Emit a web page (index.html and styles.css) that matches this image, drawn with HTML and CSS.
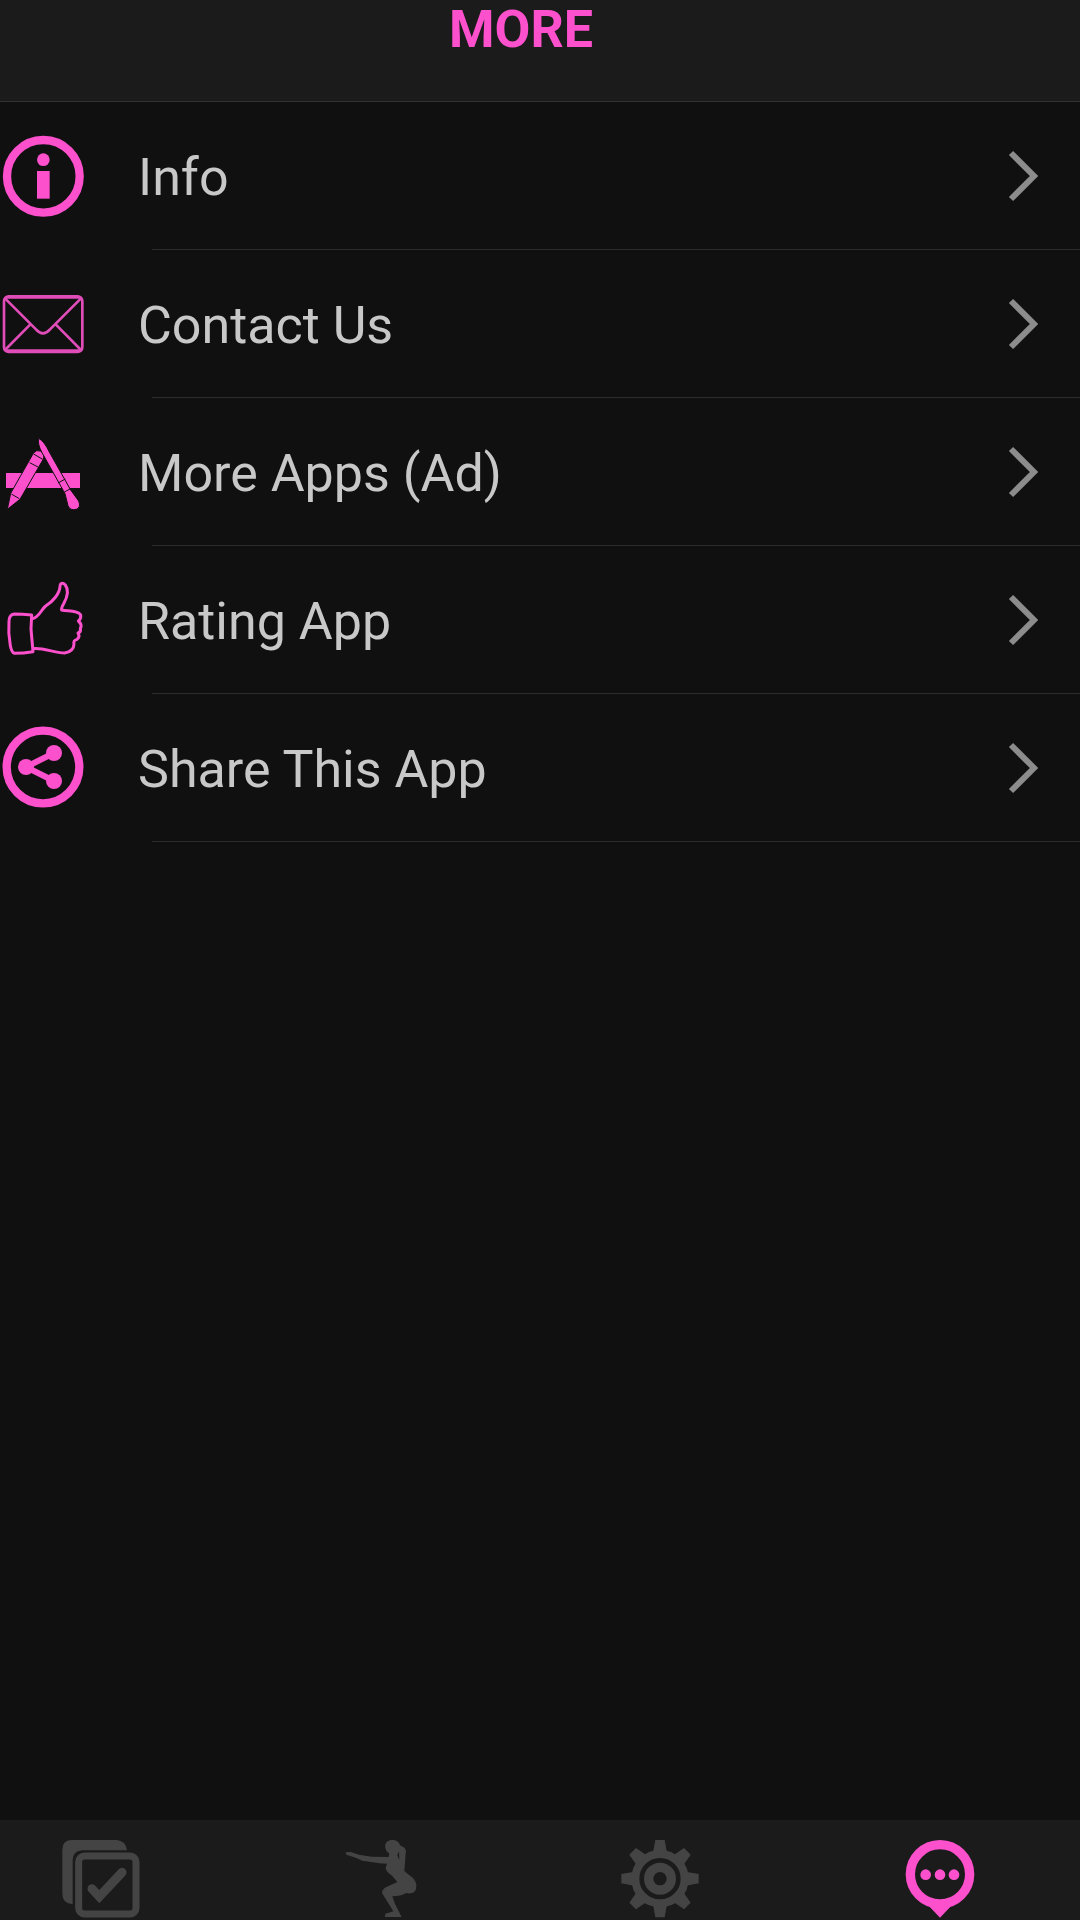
FILE: index.html
```html
<!DOCTYPE html>
<html lang="en">
<head>
<meta charset="utf-8">
<meta name="viewport" content="width=device-width, initial-scale=1">
<title>More</title>
<link rel="stylesheet" href="styles.css">
</head>
<body>
<svg class="defs" aria-hidden="true">
  <symbol id="chevron" viewBox="0 0 30 52"><path d="M3 3 26 26 3 49" fill="none" stroke="currentColor" stroke-width="6"/></symbol>
</svg>
<header class="header"><h1 class="title">MORE</h1></header>
<main class="content">
  <ul class="menu">
    <li class="item">
      <a class="link" href="#info">
        <svg class="icon" viewBox="0 66 261 261" aria-hidden="true">
          <circle cx="130" cy="199" r="109" fill="none" stroke="currentColor" stroke-width="25"/>
          <circle cx="130" cy="149" r="19"/>
          <path d="M111 183h38v83h-38z"/>
        </svg>
        <span class="label">Info</span>
        <svg class="chevron" aria-hidden="true"><use href="#chevron"/></svg>
      </a>
    </li>
    <li class="item">
      <a class="link" href="#contact">
        <svg class="icon icon-soft" viewBox="0 30 261 261" aria-hidden="true">
          <g class="outline" stroke-width="8">
            <rect x="12" y="79" width="235" height="167" rx="14"/>
            <path d="M18 83H240M18 241H240" stroke-width="6"/>
            <path d="M15 85 108 178Q129 202 150 178L243 85M15 240 91 163M243 240 167 163"/>
          </g>
        </svg>
        <span class="label">Contact Us</span>
        <svg class="chevron" aria-hidden="true"><use href="#chevron"/></svg>
      </a>
    </li>
    <li class="item">
      <a class="link" href="#apps">
        <svg class="icon" viewBox="0 24 261 261" aria-hidden="true">
          <path d="M18 159H240V204H18z"/>
          <g class="cut">
            <path d="M22 268 32 220 100 100Q108 88 121 93 134 100 131 114L129 119 60 238z"/>
            <path d="M116 55Q133 64 148 96L212 210 236 243Q244 262 229 268 210 273 204 257L195 221 126 98Q112 72 116 55z"/>
            <path d="M101 102 128 118M89 128 114 141M34 222 58 236M174 189 196 177M193 216 212 206" fill="none"/>
          </g>
        </svg>
        <span class="label">More Apps (Ad)</span>
        <svg class="chevron" aria-hidden="true"><use href="#chevron"/></svg>
      </a>
    </li>
    <li class="item">
      <a class="link" href="#rating">
        <svg class="icon" viewBox="0 48 261 261" aria-hidden="true">
          <g class="outline" stroke-width="9">
            <path d="M95 165Q66 162 43 162 28 164 27 182 24 220 31 257 35 277 43 280 70 280 99 275L93 207z"/>
            <path d="M96 176C117 174 122 150 137 138C157 126 179 102 180 79C181 66 190 68 196 75C210 94 200 115 191 131Q183 144 185 150C204 154 235 151 242 165Q244 177 235 183Q248 194 241 205Q244 216 234 219Q241 231 231 238Q219 241 222 252C222 265 212 277 194 279C160 279 129 261 98 266"/>
          </g>
        </svg>
        <span class="label">Rating App</span>
        <svg class="chevron" aria-hidden="true"><use href="#chevron"/></svg>
      </a>
    </li>
    <li class="item">
      <a class="link" href="#share">
        <svg class="icon" viewBox="0 42 261 261" aria-hidden="true">
          <circle cx="129" cy="171" r="109" fill="none" stroke="currentColor" stroke-width="25"/>
          <circle cx="78" cy="171" r="24"/><circle cx="162" cy="129" r="24"/><circle cx="162" cy="213" r="24"/>
          <path d="M162 129 78 171 162 213" fill="none" stroke="currentColor" stroke-width="18"/>
        </svg>
        <span class="label">Share This App</span>
        <svg class="chevron" aria-hidden="true"><use href="#chevron"/></svg>
      </a>
    </li>
  </ul>
</main>
<nav class="tabs" aria-label="Main">
  <a class="tab" href="#workouts" aria-label="Workouts">
    <svg class="tab-icon" viewBox="66 90 234 234" aria-hidden="true">
      <path d="M98 283Q67 280 67 251V119Q67 90 96 90H230Q257 92 261 121H130Q98 121 98 153z"/>
      <rect x="116" y="138" width="172" height="174" rx="18" fill="none" stroke="currentColor" stroke-width="21"/>
      <path d="M156 236 178 260 246 187" fill="none" stroke="currentColor" stroke-width="27" stroke-linecap="round"/>
    </svg>
  </a>
  <a class="tab" href="#exercises" aria-label="Exercises">
    <svg class="tab-icon" viewBox="65 90 234 234" aria-hidden="true">
      <path fill-rule="evenodd" d="M76 127 91 126 116 134 154 140 205 141 207 130C194 123 189 104 202 94C216 85 236 91 239 106L252 113Q259 120 256 130L252 183C265 195 286 205 288 224Q289 240 281 247 271 252 257 249 241 259 216 259L224 282 244 321H194L195 311 219 304 204 280 185 249Q185 239 198 231L231 216 216 198Q196 184 196 174L200 161 178 160 126 152 106 143 78 134zM236 124 231 136 237 150z"/>
    </svg>
  </a>
  <a class="tab" href="#settings" aria-label="Settings">
    <svg class="tab-icon" viewBox="94 90 234 234" aria-hidden="true">
      <circle cx="211" cy="206" r="74" fill="none" stroke="currentColor" stroke-width="24"/>
      <circle cx="211" cy="206" r="34" fill="none" stroke="currentColor" stroke-width="28"/>
      <g id="teeth">
        <path id="tooth" d="M190 129 197 90H225L232 129z"/>
        <use href="#tooth" transform="rotate(45 211 206)"/>
        <use href="#tooth" transform="rotate(90 211 206)"/>
        <use href="#tooth" transform="rotate(135 211 206)"/>
      </g>
      <use href="#teeth" transform="rotate(180 211 206)"/>
    </svg>
  </a>
  <a class="tab tab-active" href="#more" aria-label="More" aria-current="page">
    <svg class="tab-icon" viewBox="93 90 234 234" aria-hidden="true">
      <circle cx="210" cy="193" r="89" fill="none" stroke="currentColor" stroke-width="28"/>
      <circle cx="167" cy="194" r="16"/><circle cx="210" cy="194" r="16"/><circle cx="252" cy="194" r="16"/>
      <path d="M176 287Q210 300 244 287L210 323z"/>
    </svg>
  </a>
</nav>
</body>
</html>
```
FILE: styles.css
```css
* {
  box-sizing: border-box;
}

body {
  margin: 0;
  min-height: 100vh;
  display: flex;
  flex-direction: column;
  background: #101010;
  color: #c8c8c8;
  font-family: Roboto, "Liberation Sans", sans-serif;
}

.defs {
  display: none;
}

.header {
  height: 102px;
  padding-right: 38px;
  background: #1b1b1b;
  border-bottom: 1px solid #323232;
}

.title {
  margin: 0;
  color: #fc50cc;
  font-size: 52px;
  line-height: 60px;
  font-weight: 700;
  text-align: center;
}

.content {
  flex: 1;
}

.menu {
  margin: 0;
  padding: 0;
  list-style: none;
}

.item::after {
  content: "";
  display: block;
  height: 1px;
  margin-left: 152px;
  background: #2c2c2c;
}

.link {
  display: flex;
  align-items: center;
  height: 147px;
  padding-right: 42px;
  color: inherit;
  text-decoration: none;
}

.icon {
  flex: none;
  width: 87px;
  height: 87px;
  margin-right: 51px;
  color: #fc50cc;
  fill: currentColor;
}

.icon-soft {
  color: #e04cb8;
}

.outline {
  fill: none;
  stroke: currentColor;
  stroke-linejoin: round;
}

.cut {
  stroke: #101010;
  stroke-width: 3;
}

.label {
  flex: 1;
  padding-top: 4px;
  font-size: 52px;
  line-height: 60px;
}

.chevron {
  flex: none;
  width: 30px;
  height: 52px;
  color: #8c8c8c;
}

.tabs {
  display: flex;
  justify-content: space-between;
  height: 100px;
  padding: 20px 101px 0 62px;
  background: #1b1b1b;
}

.tab {
  width: 78px;
  height: 78px;
  color: #444;
}

.tab-active {
  color: #fc50cc;
}

.tab-icon {
  display: block;
  width: 78px;
  height: 78px;
  fill: currentColor;
}
```
